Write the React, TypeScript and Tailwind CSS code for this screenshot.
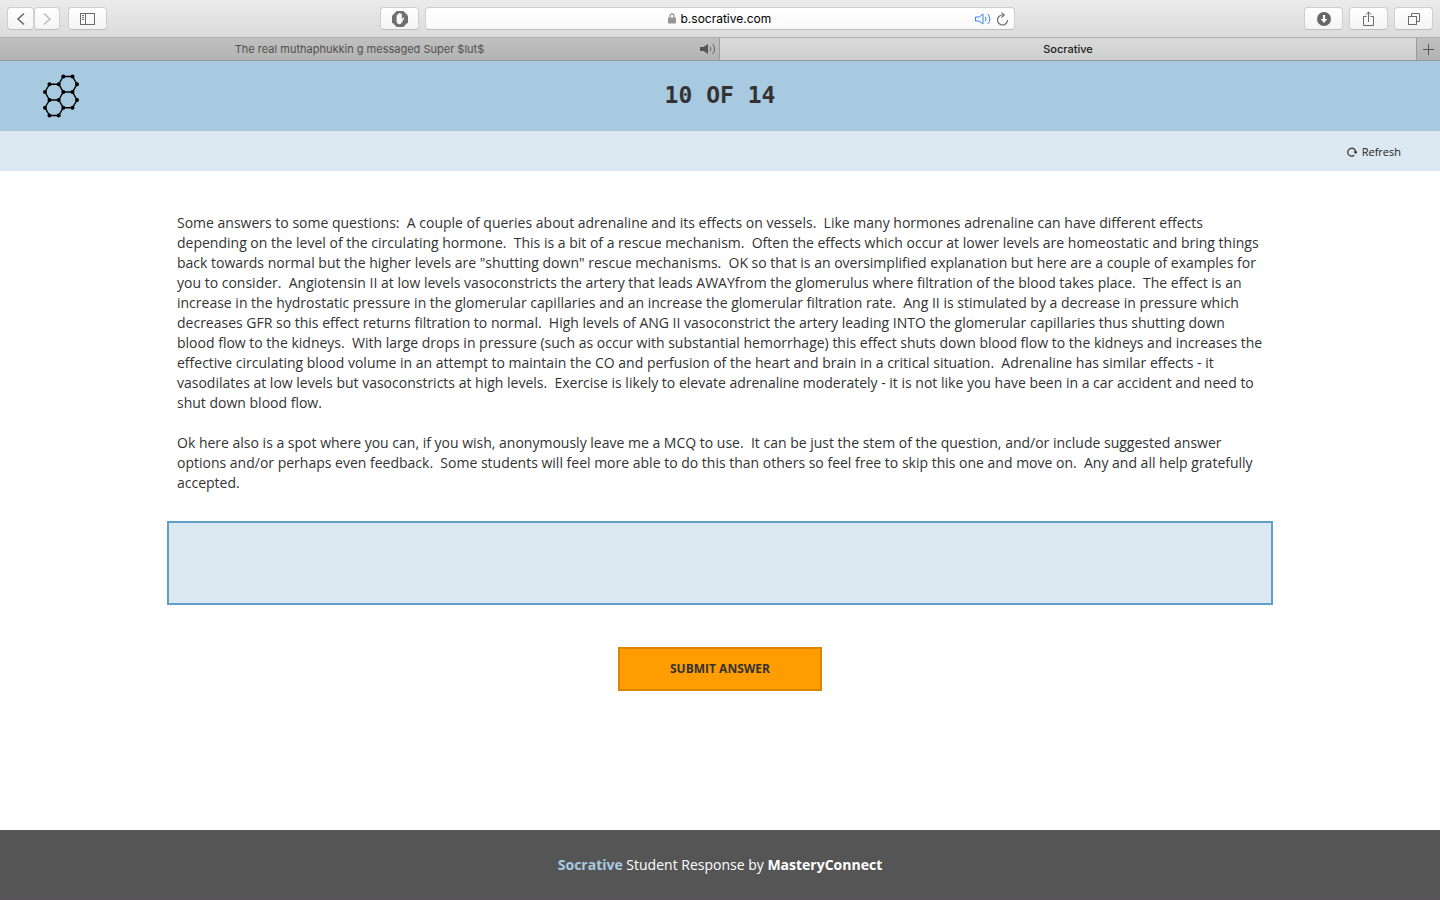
import React from "react";

const chromeButton =
  "flex h-[23px] items-center justify-center rounded-[4px] border border-[#cfcfcf] border-b-[#bdbdbd] bg-gradient-to-b from-white to-[#f4f4f4]";

function Toolbar() {
  return (
    <div className="flex h-[37px] items-center bg-gradient-to-b from-[#ebebeb] to-[#dadbda] px-[7px]">
      <div className="flex flex-1 items-center justify-between">
        <div className="flex items-center">
          <button aria-label="Back" className={`${chromeButton} w-[27px]`}>
            <svg width="10" height="14" viewBox="0 0 10 14" fill="none" stroke="#6b6b6b" strokeWidth="1.6">
              <path d="M8 1.5 2 7l6 5.5" />
            </svg>
          </button>
          <button aria-label="Forward" className={`${chromeButton} w-[26px]`}>
            <svg width="10" height="14" viewBox="0 0 10 14" fill="none" stroke="#bcbcbc" strokeWidth="1.6">
              <path d="M2 1.5 8 7l-6 5.5" />
            </svg>
          </button>
          <button aria-label="Sidebar" className={`${chromeButton} ml-2 w-[39px]`}>
            <svg width="16" height="12" viewBox="0 0 16 12" fill="none" stroke="#6b6b6b">
              <rect x="0.5" y="0.5" width="14" height="11" />
              <path d="M5.5 .5v11M2 2.5h2M2 4.5h2M2 6.5h2" />
            </svg>
          </button>
        </div>
        <button aria-label="Content blocker" className={`${chromeButton} mr-[6px] w-[39px]`}>
          <svg width="16" height="16" viewBox="0 0 16 16">
            <path d="M4.7 0h6.6L16 4.7v6.6L11.3 16H4.7L0 11.3V4.7z" fill="#6f6f6f" />
            <path
              d="M4.6 9.5V4.6c0-1 1.2-1 1.2 0V3.2c0-1 1.3-1 1.3 0v-.6c0-1 1.4-1 1.4 0v.7c0-1 1.3-.9 1.3.1v4.9l1-1.3c.6-.8 1.7-.3 1.2.5l-2.1 4c-.6 1.2-1.4 1.7-2.6 1.7-1.9 0-2.7-1.5-2.7-3.7z"
              fill="#f7f7f7"
            />
          </svg>
        </button>
      </div>
      <div className="flex h-[23px] w-[590px] items-center rounded-[4px] border border-[#cfcfcf] border-b-[#bdbdbd] bg-gradient-to-b from-white to-[#f8f8f8] px-[5px]">
        <span className="w-[36px]" />
        <label className="flex flex-1 items-center justify-center gap-[5px] text-[12px] leading-4 text-black">
          <svg width="8" height="11" viewBox="0 0 8 11">
            <path d="M2 5V3a2 2 0 0 1 4 0v2" fill="none" stroke="#979797" strokeWidth="1.3" />
            <rect y="4.6" width="8" height="6" rx=".6" fill="#979797" />
          </svg>
          <input
            aria-label="Address"
            defaultValue="b.socrative.com"
            className="w-[92px] bg-transparent p-0 outline-none"
          />
        </label>
        <div className="flex w-[36px] items-center justify-end gap-[5px]">
          <button aria-label="Mute page">
            <svg width="16" height="12" viewBox="0 0 16 12" fill="none" stroke="#3d86f7">
              <path d="M.5 4h3.5L8 1v10L4 8H.5z" />
              <path d="M10.2 3.8a3.4 3.4 0 0 1 0 4.400M12.800 1a8 8 0 0 1 0 10" />
            </svg>
          </button>
          <button aria-label="Reload">
            <svg width="13" height="14" viewBox="0 0 13 14" fill="none" stroke="#6f6f6f" strokeWidth="1.2">
              <path d="M7.5 3H6.500a5 5 0 1 0 5 5" />
              <path d="M5.5 .6 8.2 3 5.500 5.600" />
            </svg>
          </button>
        </div>
      </div>
      <div className="flex flex-1 items-center justify-end gap-[6px]">
        <button aria-label="Downloads" className={`${chromeButton} w-[39px]`}>
          <svg width="14" height="14" viewBox="0 0 14 14">
            <circle cx="7" cy="7" r="7" fill="#666" />
            <path d="M5.9 3h2.2v4h2.3L7 10.9 3.6 7h2.3z" fill="#fff" />
          </svg>
        </button>
        <button aria-label="Share" className={`${chromeButton} w-[39px]`}>
          <svg width="11" height="16" viewBox="0 0 11 16" fill="none" stroke="#6b6b6b">
            <path d="M3.5 5.5h-3v9h10v-9h-3M5.5 11V1M2.8 3.7 5.5 1l2.7 2.7" />
          </svg>
        </button>
        <button aria-label="Show tabs" className={`${chromeButton} w-[39px]`}>
          <svg width="12" height="12" viewBox="0 0 12 12" fill="none" stroke="#6b6b6b">
            <rect x=".5" y="3.5" width="8" height="8" />
            <path d="M3.5 3V.5h8v8H9" />
          </svg>
        </button>
      </div>
    </div>
  );
}

function Tabs() {
  return (
    <div className="grid h-6 grid-cols-2 border-y border-t-[#afafaf] border-b-[#999] text-[11px] leading-[22px]">
      <div className="flex border-r border-[#999] bg-gradient-to-b from-[#bfc0bf] to-[#b3b3b3] text-[#505050]">
        <button className="flex-1 pl-[19px] text-center">The real muthaphukkin g messaged Super $lut$</button>
        <button aria-label="Mute tab" className="flex w-[19px] items-center">
          <svg width="16" height="12" viewBox="0 0 16 12">
            <path d="M0 4h3.5L8 1v10L3.5 8H0z" fill="#555" />
            <path d="M10 3.8a3.4 3.4 0 0 1 0 4.4M12.600 1a8 8 0 0 1 0 10" fill="none" stroke="#666" />
          </svg>
        </button>
      </div>
      <div className="flex">
        <button className="flex-1 bg-gradient-to-b from-[#d9dad9] to-[#cfcfcf] text-center font-medium text-[#222]">
          Socrative
        </button>
        <button
          aria-label="New tab"
          className="flex w-6 items-center justify-center border-l border-[#999] bg-gradient-to-b from-[#bfc0bf] to-[#b3b3b3]"
        >
          <svg width="11" height="11" viewBox="0 0 11 11" stroke="#555">
            <path d="M5.5 0v11M0 5.5h11" />
          </svg>
        </button>
      </div>
    </div>
  );
}

const atoms = [
  [20.3, 2.5], [29.5, 2.5], [34, 10.2], [29.5, 18], [20.3, 18], [15.7, 10.2], [6.5, 10.2], [2, 18],
  [6.5, 26], [15.7, 26], [34, 26], [29.5, 33.7], [20.3, 33.7], [2, 33.7], [6.5, 41.5], [15.7, 41.5],
];

function Logo() {
  return (
    <svg width="37" height="44" viewBox="0 0 37 44" role="img" aria-label="Socrative">
      <path
        d="M20.3 2.5H29.5L34 10.2L29.5 18H20.3L15.7 10.2ZM15.7 10.2H6.5L2 18L6.5 26H15.7L20.3 18M29.5 18L34 26L29.5 33.7H20.3L15.7 26M6.5 26L2 33.7L6.5 41.5H15.7L20.3 33.7"
        fill="none"
        stroke="#000"
        strokeWidth="1.4"
      />
      {atoms.map(([x, y]) => (
        <circle key={`${x}-${y}`} cx={x} cy={y} r="2" />
      ))}
    </svg>
  );
}

const paragraphs = [
  `Some answers to some questions:  A couple of queries about adrenaline and its effects on vessels.  Like many hormones adrenaline can have different effects depending on the level of the circulating hormone.  This is a bit of a rescue mechanism.  Often the effects which occur at lower levels are homeostatic and bring things back towards normal but the higher levels are "shutting down" rescue mechanisms.  OK so that is an oversimplified explanation but here are a couple of examples for you to consider.  Angiotensin II at low levels vasoconstricts the artery that leads AWAYfrom the glomerulus where filtration of the blood takes place.  The effect is an increase in the hydrostatic pressure in the glomerular capillaries and an increase the glomerular filtration rate.  Ang II is stimulated by a decrease in pressure which decreases GFR so this effect returns filtration to normal.  High levels of ANG II vasoconstrict the artery leading INTO the glomerular capillaries thus shutting down blood flow to the kidneys.  With large drops in pressure (such as occur with substantial hemorrhage) this effect shuts down blood flow to the kidneys and increases the effective circulating blood volume in an attempt to maintain the CO and perfusion of the heart and brain in a critical situation.  Adrenaline has similar effects - it vasodilates at low levels but vasoconstricts at high levels.  Exercise is likely to elevate adrenaline moderately - it is not like you have been in a car accident and need to shut down blood flow.`,
  `Ok here also is a spot where you can, if you wish, anonymously leave me a MCQ to use.  It can be just the stem of the question, and/or include suggested answer options and/or perhaps even feedback.  Some students will feel more able to do this than others so feel free to skip this one and move on.  Any and all help gratefully accepted.`,
];

export default function App() {
  return (
    <div className="flex min-h-screen flex-col bg-white font-['Open_Sans',sans-serif] text-[#333]">
      <div className="font-[Inter,sans-serif]">
        <Toolbar />
        <Tabs />
      </div>

      <header className="grid h-[70px] grid-cols-[1fr_auto_1fr] items-center bg-[#a8cae0] px-[43px]">
        <Logo />
        <h1 className="pb-[2px] font-['DejaVu_Sans_Mono',monospace] text-[23px] leading-7 font-bold">10 OF 14</h1>
      </header>
      <div className="flex h-10 items-center justify-end bg-[#dce9f2] px-[39px]">
        <button className="flex items-center gap-[5px] pt-[2px] text-[11px] leading-4 font-medium text-[#222]">
          <svg width="10" height="10" viewBox="0 0 10 10" fill="none" stroke="#333" strokeWidth="1.2">
            <path d="M7.3 8.3A4 4 0 1 1 8.8 5" />
            <path d="M6.5 4.5h4L8.6 7z" fill="#333" stroke="none" />
          </svg>
          Refresh
        </button>
      </div>

      <main className="mx-auto flex w-full max-w-[1106px] flex-1 flex-col items-center pt-[42px]">
        <div className="flex flex-col gap-5 px-[10px] text-[14px] leading-5 whitespace-pre-wrap">
          {paragraphs.map((text) => (
            <p key={text}>{text}</p>
          ))}
        </div>
        <textarea
          aria-label="Answer"
          className="mt-7 h-[84px] w-full resize-none border-2 border-[#5f9fc8] bg-[#dce9f2] p-2 outline-none"
        />
        <button className="mt-[42px] h-11 w-[204px] border-2 border-[#db8500] bg-[#ff9d00] text-[12px] leading-4 font-bold">
          SUBMIT ANSWER
        </button>
      </main>

      <footer className="flex h-[70px] items-center justify-center border-b border-[#5a5056] bg-[#555] text-[14px] leading-5 text-white">
        <p>
          <a href="#socrative" className="font-bold text-[#a8cae0]">Socrative</a> Student Response by{" "}
          <a href="#masteryconnect" className="font-bold">MasteryConnect</a>
        </p>
      </footer>
    </div>
  );
}
